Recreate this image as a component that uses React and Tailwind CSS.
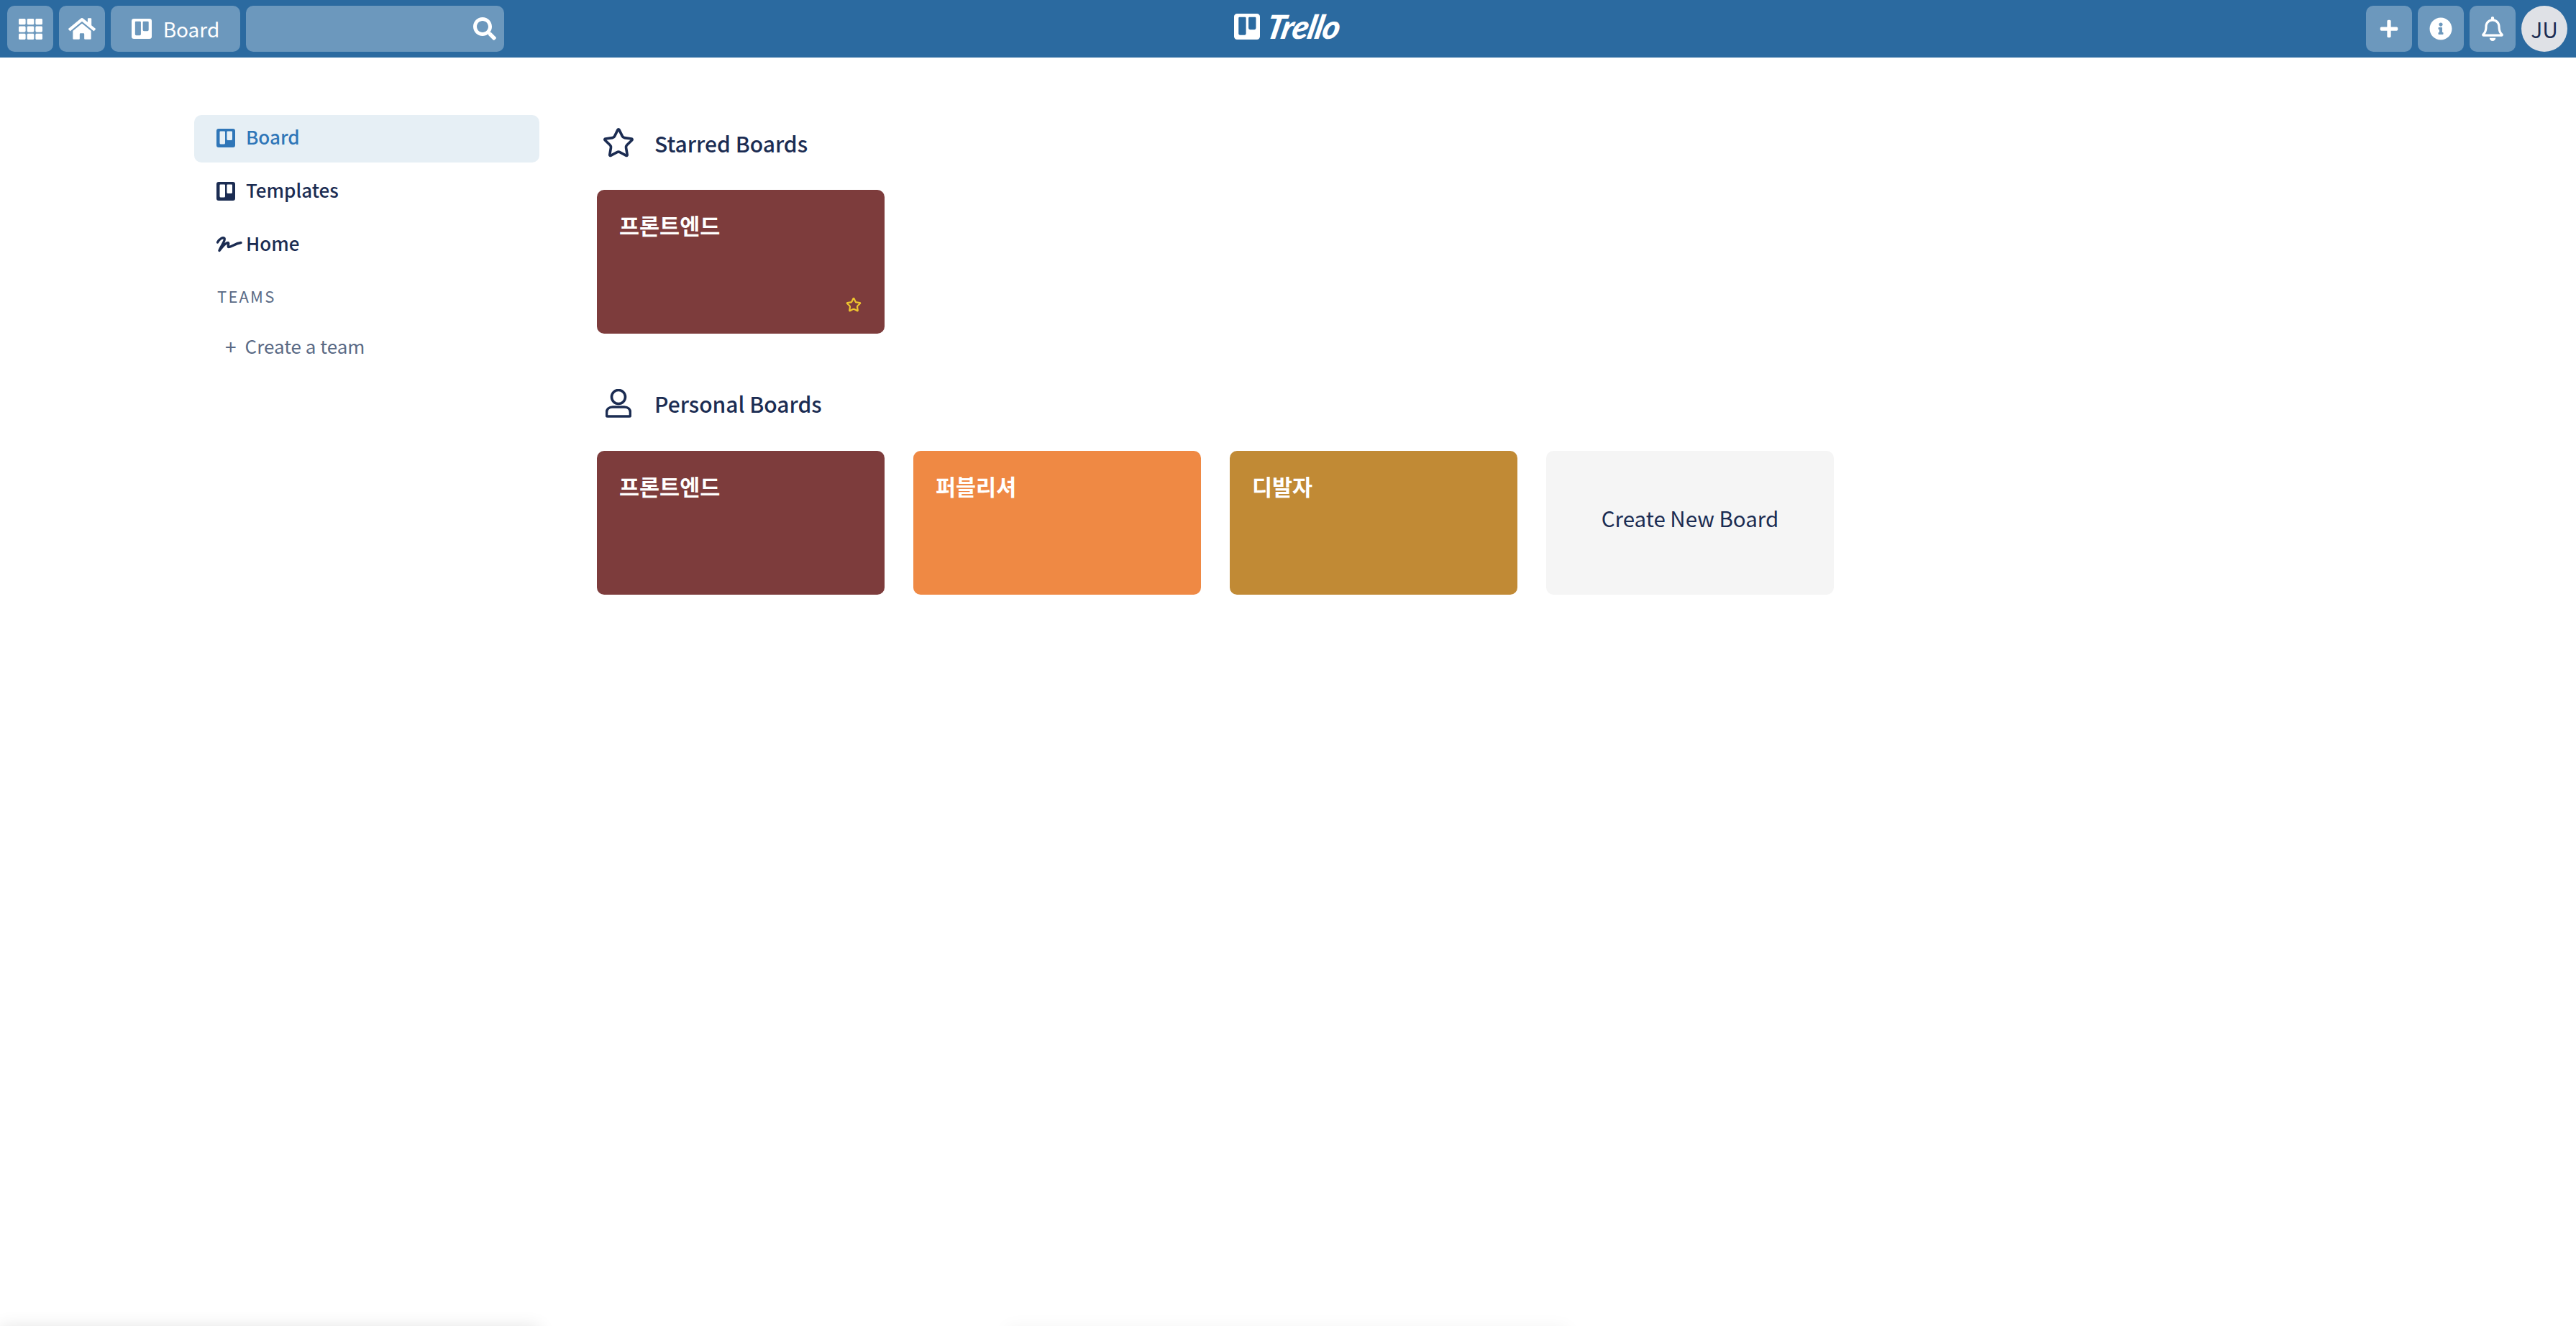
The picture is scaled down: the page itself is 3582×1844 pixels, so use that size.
import React from "react";
import { FaHome, FaSearch, FaTh, FaPlus, FaInfoCircle, FaRegBell } from "react-icons/fa";
import { Star } from "lucide-react";

const sans = "font-['Noto_Sans_CJK_KR','Noto_Sans',sans-serif]";

function BoardGlyph({ className }) {
  return (
    <svg viewBox="0 0 26 26" className={className} fill="currentColor">
      <path fillRule="evenodd" d="M3 0h20a3 3 0 0 1 3 3v20a3 3 0 0 1-3 3H3a3 3 0 0 1-3-3V3a3 3 0 0 1 3-3zm1.500 4.500v15.500a1.500 1.500 0 0 0 1.500 1.500h4.500a1.500 1.500 0 0 0 1.500-1.500V4.500a1 1 0 0 0-1-1H5.500a1 1 0 0 0-1 1zm10 0v10a1.500 1.500 0 0 0 1.500 1.500h4.500a1.500 1.500 0 0 0 1.500-1.500v-10a1 1 0 0 0-1-1h-5.500a1 1 0 0 0-1 1z" />
    </svg>
  );
}

function Squiggle({ className }) {
  return (
    <svg viewBox="0 0 36 22" className={className} fill="none" stroke="currentColor" strokeWidth="3.400" strokeLinecap="round" strokeLinejoin="round">
      <path d="M1.500 8C4 3 9 .5 11 2.500c2 3-5 11-7 17 3-4 9-11 12-11 2 0-1 6 1 6 5 0 8-5 17-6" />
    </svg>
  );
}

function PersonGlyph({ className }) {
  return (
    <svg viewBox="0 0 36 40" className={className} fill="none" stroke="currentColor" strokeWidth="3.600">
      <circle cx="18" cy="11" r="9.500" />
      <path d="M10 25h16c5 0 8.500 3 8.500 7.500v4a1.500 1.500 0 0 1-1.500 1.500H3a1.500 1.500 0 0 1-1.500-1.500v-4C1.500 28 5 25 10 25z" />
    </svg>
  );
}

function HeaderButton({ children, className = "w-16" }) {
  return (
    <div className={`h-16 rounded-[10px] bg-[#6c98bd] flex items-center justify-center text-white ${className}`}>
      {children}
    </div>
  );
}

function Card({ title, color, star }) {
  return (
    <div className={`relative w-[400px] h-[200px] rounded-[10px] py-[30px] pl-[31px] pr-[30px] ${color}`}>
      <div className="text-[30.500px] leading-[44px] font-bold text-white -mt-[3px]">{title}</div>
      {star && <Star className="absolute right-[32px] bottom-[29px] w-[22px] h-[22px] text-[#eec52e]" strokeWidth={2.4} />}
    </div>
  );
}

function SectionTitle({ icon, children, className }) {
  return (
    <div className={`flex items-center h-[60px] text-[#1b2c52] ${className}`}>
      <div className="w-[60px] flex justify-center">{icon}</div>
      <h2 className="ml-5 text-[30px] leading-[40px] font-medium">{children}</h2>
    </div>
  );
}

function NavItem({ icon, label, active }) {
  return (
    <div className={`h-[66px] rounded-[10px] flex items-center text-[26px] font-medium ${active ? "bg-[#e6eff5] text-[#2f76b8]" : "text-[#1b2c52]"}`}>
      <div className="w-[72px] pl-[31px] -mt-[3px] flex items-center shrink-0">{icon}</div>
      <span className="-mt-[8px]">{label}</span>
    </div>
  );
}

export default function App() {
  return (
    <div className={`relative h-[1844px] overflow-hidden bg-white ${sans}`}>
      <header className="h-20 bg-[#2b6aa0] flex items-center justify-between pl-[10px] pr-[7px]">
        <div className="flex items-center gap-2 flex-1">
          <HeaderButton><FaTh className="w-[33px] h-[33px]" /></HeaderButton>
          <HeaderButton><FaHome className="w-[38px] h-[38px]" /></HeaderButton>
          <HeaderButton className="w-[180px] gap-[16px]">
            <BoardGlyph className="w-[28px] h-[28px]" />
            <span className="text-[28px] leading-none">Board</span>
          </HeaderButton>
          <div className="h-16 w-[359px] rounded-[10px] bg-[#6c98bd] flex items-center justify-end pr-[11px] text-white">
            <FaSearch className="w-[32px] h-[32px]" />
          </div>
        </div>
        <div className="flex items-center gap-[10px] text-white -mt-[6px]">
          <BoardGlyph className="w-9 h-9" />
          <span className="font-['Lato',sans-serif] italic font-black text-[46px] leading-none tracking-[-1px] -skew-x-12">Trello</span>
        </div>
        <div className="flex items-center justify-end gap-2 flex-1 pr-[5px]">
          <HeaderButton><FaPlus className="w-7 h-7" /></HeaderButton>
          <HeaderButton><FaInfoCircle className="w-8 h-8" /></HeaderButton>
          <HeaderButton><FaRegBell className="w-[34px] h-[34px]" /></HeaderButton>
          <div className="w-16 h-16 rounded-full bg-[#dfe1e6] text-[#1b2c52] flex items-center justify-center text-[30px]">JU</div>
        </div>
      </header>

      <div className="flex pl-[270px] pt-20">
        <nav className="w-[480px] flex flex-col gap-2">
          <NavItem active label="Board" icon={<BoardGlyph className="w-[26px] h-[26px]" />} />
          <NavItem label="Templates" icon={<BoardGlyph className="w-[26px] h-[26px]" />} />
          <NavItem label="Home" icon={<Squiggle className="w-[36px] h-[22px]" />} />
          <div className="pl-[32px] mt-[15px] text-[22px] leading-[28px] tracking-[2.200px] text-[#5a6a85]">TEAMS</div>
          <div className="mt-[28px] flex items-center pl-[43px] gap-[12px] text-[26px] leading-[40px] text-[#5a6a85]">
            <span className="text-[28px] leading-none">+</span>
            <span>Create a team</span>
          </div>
        </nav>

        <main className="ml-[80px]">
          <SectionTitle className="mt-[9px]" icon={<Star className="w-[46px] h-[46px]" strokeWidth={1.900} />}>Starred Boards</SectionTitle>
          <div className="mt-[35px]">
            <Card title="프론트엔드" color="bg-[#7d3c3c]" star />
          </div>
          <SectionTitle className="mt-[67px]" icon={<PersonGlyph className="w-9 h-10" />}>Personal Boards</SectionTitle>
          <div className="mt-[36px] flex gap-10">
            <Card title="프론트엔드" color="bg-[#7d3c3c]" />
            <Card title="퍼블리셔" color="bg-[#ef8944]" />
            <Card title="디발자" color="bg-[#c18a35]" />
            <div className="w-[400px] h-[200px] pb-[14px] rounded-[10px] bg-[#f5f5f5] flex items-center justify-center text-[29.500px] text-[#1b2c52]">Create New Board</div>
          </div>
        </main>
      </div>

      <div className="absolute left-0 top-[1846px] w-[750px] h-10 shadow-[0_0_24px_rgba(0,0,0,0.12)]" />
      <div className="absolute left-[1400px] top-[1846px] w-[780px] h-10 shadow-[0_0_24px_rgba(0,0,0,0.05)]" />
    </div>
  );
}
